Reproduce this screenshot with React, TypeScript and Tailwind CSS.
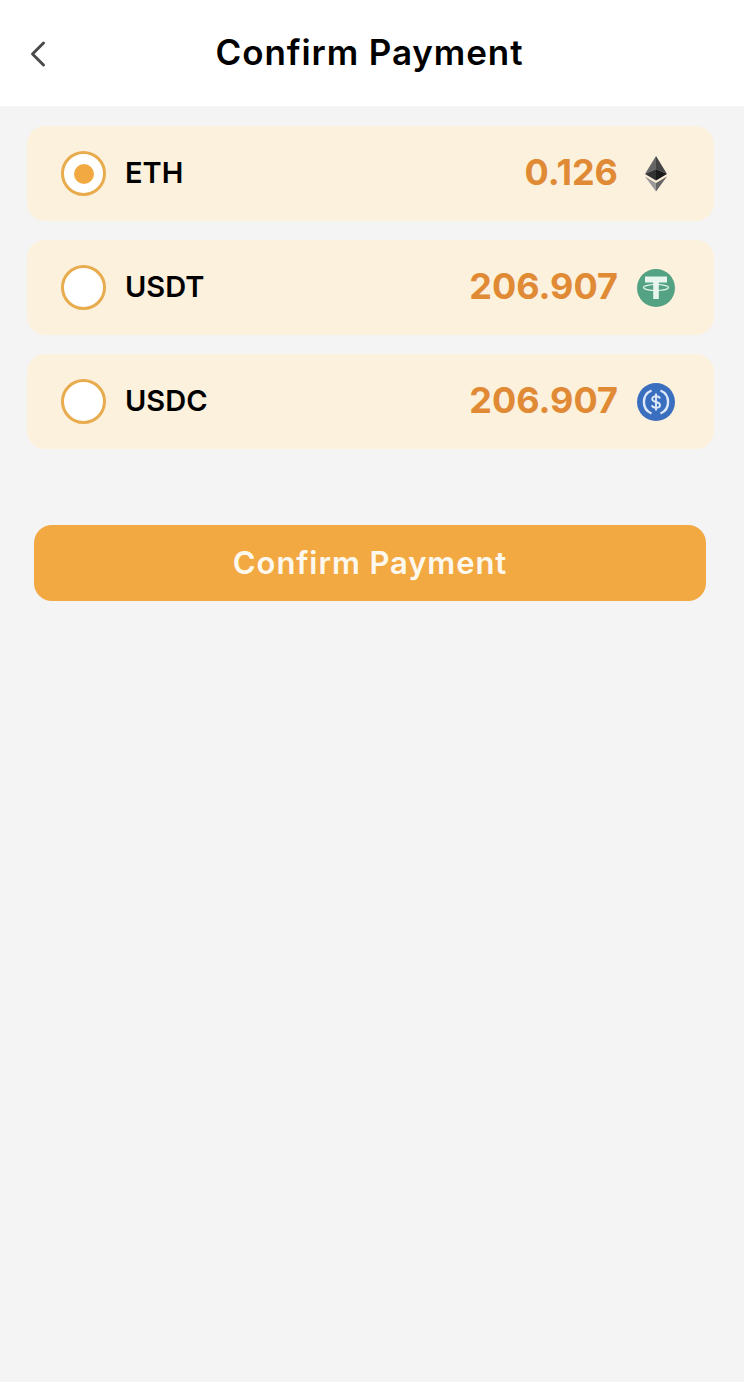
import { ChevronLeft } from 'lucide-react';

const EthIcon = () => (
  <svg width="22" height="36" viewBox="0 0 22 36">
    <path d="M11 0 L0 18 L11 13 Z" fill="#666666" />
    <path d="M11 0 L22 18 L11 13 Z" fill="#444444" />
    <path d="M11 13 L0 18 L11 24.5 Z" fill="#333333" />
    <path d="M11 13 L22 18 L11 24.5 Z" fill="#1a1a1a" />
    <path d="M0 20.5 L11 35.5 L11 27 Z" fill="#9a9a9a" />
    <path d="M22 20.5 L11 35.5 L11 27 Z" fill="#666666" />
  </svg>
);

const UsdtIcon = () => (
  <svg width="38" height="38" viewBox="0 0 38 38">
    <circle cx="19" cy="19" r="19" fill="#53a283" />
    <path d="M8 7.5 H30 V13.5 H21.8 V30 H16.2 V13.5 H8 Z" fill="#e8f5ef" />
    <ellipse cx="19" cy="18.5" rx="12.5" ry="3" fill="none" stroke="#e8f5ef" strokeWidth="1.2" />
  </svg>
);

const UsdcIcon = () => (
  <svg width="38" height="38" viewBox="0 0 38 38">
    <circle cx="19" cy="19" r="19" fill="#3a6fc0" />
    <path d="M14.5 7.5 A12.5 12.5 0 0 0 14.5 30.5" fill="none" stroke="#dfe9f8" strokeWidth="2.4" />
    <path d="M23.5 7.5 A12.5 12.5 0 0 1 23.5 30.5" fill="none" stroke="#dfe9f8" strokeWidth="2.4" />
    <path
      d="M23 15.6 C22.5 13.9 21 13.2 19 13.2 C16.8 13.2 15.2 14.3 15.2 16 C15.2 20 23 18 23 22 C23 23.7 21.3 24.8 19 24.8 C16.9 24.8 15.4 24 14.9 22.3 M19 10.5 V27.5"
      fill="none"
      stroke="#dfe9f8"
      strokeWidth="1.9"
    />
  </svg>
);

const coins = [
  { name: 'ETH', amount: '0.126', icon: <EthIcon />, selected: true },
  { name: 'USDT', amount: '206.907', icon: <UsdtIcon />, selected: false },
  { name: 'USDC', amount: '206.907', icon: <UsdcIcon />, selected: false },
];

const App = () => {
  return (
    <div className="min-h-[1382px] bg-[#f4f4f5] font-['Inter',sans-serif]">
      <header className="relative flex h-[106px] items-center justify-center bg-white pr-[5px]">
        <ChevronLeft size={44} strokeWidth={1.6} className="absolute left-[16px] top-[32px] text-[#4a4a4a]" />
        <h1 className="pb-[2px] text-[35px] font-semibold tracking-[0.9px] text-black">Confirm Payment</h1>
      </header>

      <div className="flex flex-col gap-[19px] pl-[27px] pr-[30px] pt-[20px]">
        {coins.map((coin) => (
          <div
            key={coin.name}
            className="flex h-[95px] items-center rounded-[18px] bg-[#fcf1dd] pl-[34px] pr-[39px]"
          >
            <div className="flex h-[45px] w-[45px] items-center justify-center rounded-full border-[3px] border-[#e8ab4e] bg-white">
              {coin.selected && <div className="h-[20px] w-[20px] rounded-full bg-[#f2a941]" />}
            </div>
            <span className="ml-[19px] pb-[2px] text-[29px] font-semibold text-black">{coin.name}</span>
            <span className="ml-auto pb-[3px] text-[36px] font-bold text-[#e08a35]">{coin.amount}</span>
            <div className="ml-[19px] flex w-[38px] justify-center">{coin.icon}</div>
          </div>
        ))}
      </div>

      <div className="mt-[76px] pl-[34px] pr-[38px]">
        <button className="h-[76px] w-full rounded-[18px] bg-[#f3a941] text-[31px] font-semibold tracking-[0.9px] text-[#fdf8ee]">
          Confirm Payment
        </button>
      </div>
    </div>
  );
};

export default App;
